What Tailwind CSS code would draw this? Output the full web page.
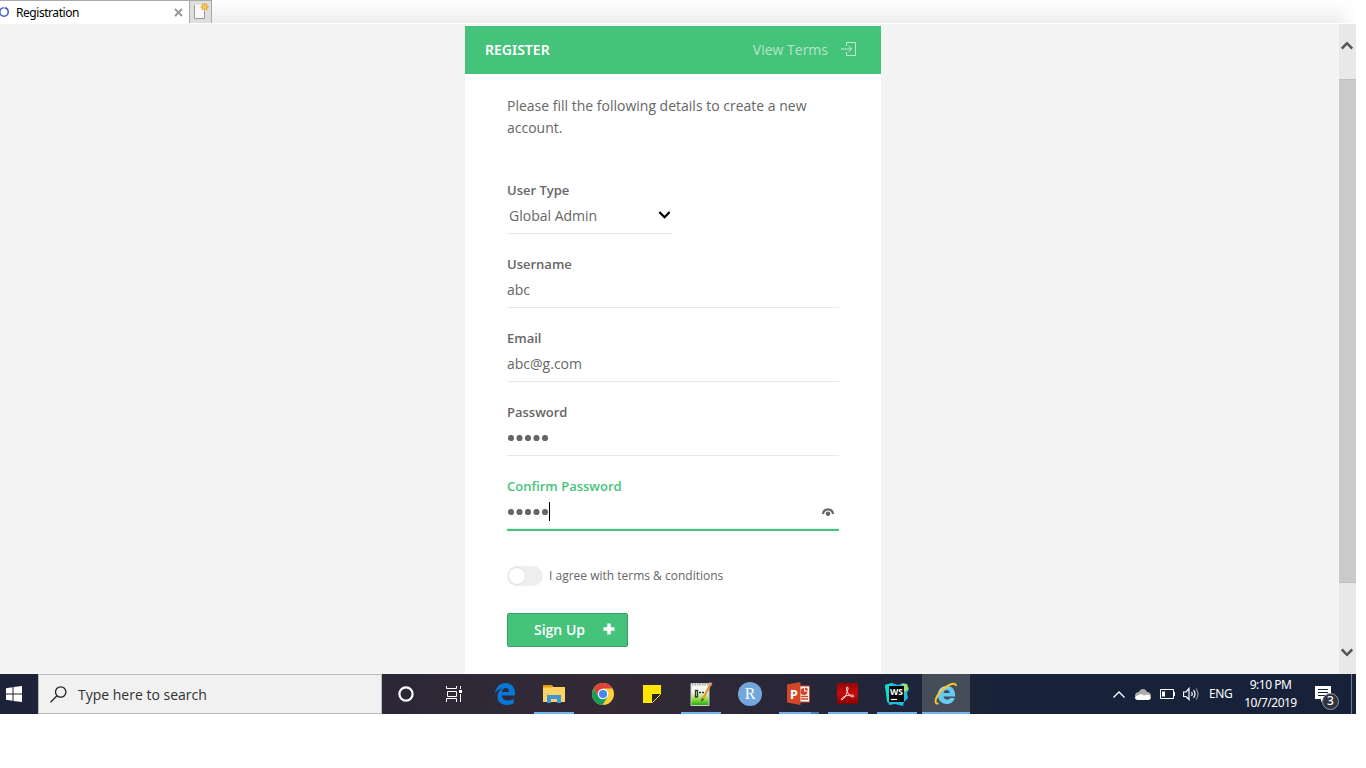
<!DOCTYPE html>
<html lang="en">
<head>
<meta charset="utf-8">
<title>Registration</title>
<script src="https://cdn.jsdelivr.net/npm/@tailwindcss/browser@4"></script>
</head>
<body class="bg-white w-[1366px] h-[768px] overflow-hidden font-['Open_Sans',sans-serif] text-[#666]">
<!-- tab strip -->
<header class="flex w-[1356px] h-6 bg-linear-to-b from-white to-[#eeeeee] border-b border-white font-['Noto_Sans',sans-serif]">
  <div class="w-[189px] h-[23px] bg-white border-t border-[#aaa] flex items-center text-black text-[12px]">
    <svg class="w-[9px] h-3 shrink-0" viewBox="0 0 9 12" fill="none" stroke="#4661b0" stroke-width="1.6"><circle cx="4" cy="6" r="4.200" stroke-dasharray="24.700 1.700" stroke-dashoffset="-.8" transform="rotate(-90 4 6)"/></svg>
    <span class="ml-[7px] w-[158px] whitespace-nowrap pt-px tracking-[-0.45px]">Registration</span>
    <svg class="w-[9px] h-[9px]" viewBox="0 0 9 9" stroke="#999" stroke-width="2"><path d="M1 1l7 7M8 1l-7 7"/></svg>
  </div>
  <div class="w-[23px] h-[23px] bg-[#dedede] border border-b-0 border-[#aaa] flex justify-center">
    <svg class="w-[17px] h-[19px]" viewBox="0 0 17 19"><path d="M2.5 4.500h10v13h-10z" fill="#f8f8f8" stroke="#999"/><path d="M3 4.500h9" stroke="#fff"/><path d="M12.500 2.500v8M8.500 6.500h8M9.700 3.700l5.600 5.600M15.300 3.700L9.700 9.300" stroke="#eda52c" stroke-width="1.3"  transform="translate(0 -.5)"/><circle cx="12.500" cy="6" r="1.800" fill="#ffcc55"/></svg>
  </div>
  <div class="ml-auto w-5 h-[23px] bg-linear-to-r from-transparent to-white"></div>
</header>
<!-- page viewport -->
<div class="flex w-[1356px] h-[650px]">
  <main class="w-[1339px] bg-[#f4f4f4] pl-[465px] pt-[2px]">
    <section class="w-[416px] h-[648px] bg-white">
      <div class="h-12 bg-[#46c37b] flex items-center pl-[20px] pr-[24px] text-[14px]">
        <h1 class="font-['Noto_Sans',sans-serif] font-semibold text-white text-[14px] -mt-px"><span class="inline-block w-[65px]">REGISTER</span></h1>
        <a class="ml-auto text-white/60 -mt-[2px]">View Terms</a>
        <svg class="ml-[13px] w-4 h-4 -mt-[3px]" viewBox="0 0 16 16" fill="none" stroke="#fff" stroke-opacity=".65"><path d="M5.500 5V1.500h9v13h-9V11M0 8h10.500M7.500 5l3 3-3 3"/></svg>
      </div>
      <div class="px-[42px] pt-[21px]">
        <p class="text-[14px] leading-[22px] h-[44px] w-[320px]">Please fill the following details to create a new account.</p>
        <form class="pt-[41px] flex flex-col gap-5">
          <div class="w-[166px] h-[54px] border-b border-[#e8e8e8]">
            <label class="block text-[13px] leading-5 font-semibold">User Type</label>
            <div class="flex items-center justify-between h-[30px] text-[14px] pl-[2px] pr-[3px]"><span>Global Admin</span>
              <svg class="w-3 h-2" viewBox="0 0 12 8" fill="none" stroke="#000" stroke-width="2.200"><path d="M1.300 1l5.200 5.200L11.700 1"/></svg></div>
          </div>
          <div class="h-[54px] border-b border-[#e8e8e8]">
            <label class="block text-[13px] leading-5 font-semibold">Username</label>
            <div class="flex items-center h-[30px] text-[14px]">abc</div>
          </div>
          <div class="h-[54px] border-b border-[#e8e8e8]">
            <label class="block text-[13px] leading-5 font-semibold">Email</label>
            <div class="flex items-center h-[30px] text-[14px]">abc@g.com</div>
          </div>
          <div class="h-[54px] border-b border-[#e8e8e8]">
            <label class="block text-[13px] leading-5 font-semibold">Password</label>
            <svg class="block w-[42px] h-[7px] mt-[13px]" viewBox="0 0 42 7" fill="#666"><circle cx="4" cy="3" r="3.100"/><circle cx="12.500" cy="3" r="3.100"/><circle cx="21" cy="3" r="3.100"/><circle cx="29.500" cy="3" r="3.100"/><circle cx="38" cy="3" r="3.100"/></svg>
          </div>
          <div class="h-[55px] border-b-2 border-[#46c37b]">
            <label class="block text-[13px] leading-5 font-semibold text-[#46c37b]">Confirm Password</label>
            <div class="flex items-start h-[33px] border-b border-[#e0f3e8] pr-[5px]">
              <svg class="block w-[42px] h-[7px] mt-[13px]" viewBox="0 0 42 7" fill="#666"><circle cx="4" cy="3" r="3.100"/><circle cx="12.500" cy="3" r="3.100"/><circle cx="21" cy="3" r="3.100"/><circle cx="29.500" cy="3" r="3.100"/><circle cx="38" cy="3" r="3.100"/></svg>
              <b class="w-px h-[19px] bg-black mt-[6px]"></b>
              <svg class="ml-auto w-3 h-2 mt-[12px]" viewBox="0 0 12 8"><path d="M.9 6C2-.1 10-.1 11.100 6" fill="none" stroke="#666" stroke-width="2.200"/><circle cx="6" cy="5.700" r="2.300" fill="#666"/></svg>
            </div>
          </div>
        </form>
        <div class="mt-[35px] flex items-center h-5 text-[12px]">
          <div class="w-9 h-5 rounded-full bg-[#eee] p-[2px]"><div class="size-4 rounded-full bg-white shadow-[0_0_2px_#ccc]"></div></div>
          <span class="ml-[6px]">I agree with terms &amp; conditions</span>
        </div>
        <button class="mt-[27px] w-[121px] h-[34px] rounded-[2px] bg-[#46c37b] border border-[#34a263] text-white font-semibold text-[14px] flex items-center pl-[26px] pb-[2px]">Sign Up
          <svg class="ml-[18px] w-3 h-3" viewBox="0 0 12 12" fill="#fff"><path d="M4.300.5h3.400v3.800h3.800v3.400H7.700v3.800H4.300V7.700H.5V4.300h3.800z"/></svg>
        </button>
      </div>
    </section>
  </main>
  <aside class="w-[17px] bg-[#e8e8e8] flex flex-col items-center">
    <div class="h-[55px] pt-[17px]"><svg class="w-3 h-[9px] mr-px" viewBox="0 0 12 9" fill="none" stroke="#555" stroke-width="2.500"><path d="M.8 7.500L6 2.200l5.200 5.300"/></svg></div>
    <div class="w-full h-[504px] bg-[#cacaca] border-y border-[#c0c0c0]"></div>
    <div class="pt-[65px]"><svg class="w-3 h-[9px] mr-px" viewBox="0 0 12 9" fill="none" stroke="#555" stroke-width="2.500"><path d="M.8 1.500L6 6.800l5.200-5.300"/></svg></div>
  </aside>
</div>
<!-- taskbar -->
<footer class="flex w-[1356px] h-10 bg-linear-to-r from-[#1c2238] from-0% via-[#342a36] via-45% to-[#17223a] to-75% text-white font-['Noto_Sans',sans-serif]">
  <div class="w-[38px] flex items-center pl-[6px]"><svg class="w-4 h-4" viewBox="0 0 16 16" fill="#fff"><path d="M0 2.200L6.500 1.300V7.500H0zM7.500 1.100L16 0V7.500H7.500zM0 8.500h6.500v6.200L0 13.800zM7.500 8.500H16V16l-8.500-1.100z"/></svg></div>
  <div class="w-[344px] bg-[#f1f1f1] border border-[#bbb] flex items-center pl-[11px] text-[#303030] font-['Open_Sans',sans-serif] text-[14px]">
    <svg class="w-[17px] h-[17px]" viewBox="0 0 17 17" fill="none" stroke="#222" stroke-width="1.300"><circle cx="10.700" cy="6" r="5.200"/><path d="M7 9.800L.5 16.300"/></svg>
    <span class="ml-[11px]">Type here to search</span>
  </div>
  <div class="w-12 flex items-center justify-center"><svg class="w-4 h-4" viewBox="0 0 16 16"><circle cx="8" cy="8" r="6.600" fill="none" stroke="#fff" stroke-width="2.200"/></svg></div>
  <div class="w-12 flex items-center justify-center"><svg class="w-4 h-4 mb-px" viewBox="0 0 16 16" fill="none" stroke="#fff"><path d="M.5 0v2.500h10V0M.5 16v-3.500h10V16M1.500 5.500h9v5h-9zM14.500 0v3M14.500 8v8"/><path d="M13 4h3v3h-3z" fill="#fff" stroke="none"/></svg></div>
  <nav class="flex gap-px ml-[3px]">
    <div class="w-12 flex items-center justify-center"><svg class="w-[20px] h-[22px]" viewBox="0 0 20 22"><path d="M0 10C1 4 5 0 10.500 0 16.500 0 20 4.500 20 10v2.500H6.800c.3 3.500 3 4.900 6 4.900 2.300 0 4.100-.6 5.900-1.700v4.500c-2.100 1.200-4.300 1.700-6.800 1.700C6 22 2.500 18.500 2.500 13.500c0-3.500 1.800-6.400 5-8C7.200 5.600 2.800 6 0 10zm7-1h7c0-2.500-1.200-4-3.300-4S7.500 6.500 7 9z" fill="#0878d8" fill-rule="evenodd"/></svg></div>
    <div class="w-12 flex flex-col items-center justify-between"><svg class="w-[22px] h-5 mt-[10px]" viewBox="0 0 22 20"><path d="M0 1h9l1 2h12v15H0z" fill="#ffd264"/><path d="M0 1h9v2.500H0z" fill="#dca000"/><path d="M4 19v-8h14v8h-4v-4H8v4z" fill="#3d96d7"/></svg><b class="w-10 h-[2px] bg-[#72b5f1]"></b></div>
    <div class="w-12 flex items-center justify-center"><svg class="w-[22px] h-[22px]" viewBox="0 0 22 22"><circle cx="11" cy="11" r="11" fill="#fbcf3a"/><path d="M1.500 5.500A11 11 0 0 1 20.500 5.500H11L6.500 13.500z" fill="#dc4437"/><path d="M1.500 5.500A11 11 0 0 0 10.500 22L15.500 14 6.500 13.500z" fill="#169b5a"/><circle cx="11" cy="11" r="5.300" fill="#fff"/><circle cx="11" cy="11" r="4.100" fill="#4788f4"/></svg></div>
    <div class="w-12 flex items-center justify-center"><svg class="w-[18px] h-[18px]" viewBox="0 0 18 18"><path d="M0 0h18v18H0z" fill="#ffe500"/><path d="M9 9h9l-9 9z" fill="#26262b"/><path d="M18 9v9H9z" fill="#342a36"/><path d="M17.500 9.500l-8 8" stroke="#ffe500"/></svg></div>
    <div class="w-12 flex flex-col items-center justify-between"><svg class="w-[23px] h-6 mt-2" viewBox="0 0 23 24"><defs><linearGradient id="g" x2="0" y2="1"><stop offset=".4" stop-color="#f4f8ee"/><stop offset=".75" stop-color="#83d935"/><stop offset="1" stop-color="#20a51b"/></linearGradient></defs><path d="M1 1.500h18v22H1z" fill="url(#g)" stroke="#ccc"/><path d="M2 2.500h16" stroke="#aaa" stroke-width="2" stroke-dasharray="1.500 1"/><path d="M7.500 15H5.500V8.500H7.500V15M9 10.500h2M12 10.500h2" stroke="#333" fill="none" stroke-width="1.300"/><path d="M20.500 2L13 17" stroke="#e3992f" stroke-width="2.400"/><path d="M19.800 3.300l1.300-2.600" stroke="#d99991" stroke-width="3"/><path d="M11.800 15.800L11 20l3.200-2.500z" fill="#6b4b29"/></svg><b class="w-10 h-[2px] bg-[#72b5f1]"></b></div>
    <div class="w-12 flex items-center justify-center"><div class="size-6 rounded-full bg-[#73a7dc] flex items-center justify-center text-[16px] leading-none pb-px font-['Liberation_Serif',serif]">R</div></div>
    <div class="w-12 flex flex-col items-center justify-between"><svg class="w-[23px] h-6 mt-2 mr-px" viewBox="0 0 23 24"><path d="M11 4h11.500v16H11z" fill="#fff" stroke="#d24726"/><path d="M14 14.500h7M14 17h7" stroke="#d24726" stroke-width="1.300"/><path d="M17 6a3.500 3.500 0 1 0 3.500 3.500H17z" fill="#d24726"/><path d="M18 5.500V8.500h3A3 3 0 0 0 18 5.500" fill="#d24726"/><path d="M0 2.500L13.500 0v23L0 20.500z" fill="#d24726"/><text x="3" y="16.500" font-family="Noto Sans" font-weight="700" font-size="12.500" fill="#fff">P</text></svg><b class="w-10 h-[2px] bg-[#72b5f1] border-r-8 border-[#4682b4]"></b></div>
    <div class="w-12 flex flex-col items-center justify-between"><svg class="w-[21px] h-[21px] mt-[9px] mr-px" viewBox="0 0 21 21"><defs><linearGradient id="r" x2="0" y2="1"><stop stop-color="#950707"/><stop offset=".5" stop-color="#c80b0b"/><stop offset="1" stop-color="#840303"/></linearGradient></defs><path d="M0 0h21v21H0z" fill="url(#r)"/><path d="M10.500 9C8 4 10.700 2.700 11 5c.3 2-3.300 11.500-6 11.700C2 16.500 8 12 14 12c4 0 3.500 2.300 1 1.800C12.500 13 11.200 11 10.500 9z" fill="none" stroke="#ffe5e5" stroke-width="1"/></svg><b class="w-10 h-[2px] bg-[#72b5f1]"></b></div>
    <div class="w-12 flex flex-col items-center justify-between"><svg class="w-6 h-6 mt-2" viewBox="0 0 24 24"><path d="M0 3l7-2 6 2 5-2 4 1 2 5-2 4 1 5-4 4-1 4-8-2-6 1-2-7z" fill="#20b8e8"/><path d="M0 3l7-2-2 20-3-1z" fill="#10ddcc"/><path d="M17 2l5 0 1 6-4 2z" fill="#a6df61"/><path d="M4 4h15v16H4z" fill="#080808"/><text x="5" y="13" font-family="Noto Sans" font-weight="700" font-size="9" textLength="13" lengthAdjust="spacingAndGlyphs" fill="#fff">WS</text><path d="M6 17.500h6" stroke="#fff" stroke-width="1.200"/></svg><b class="w-10 h-[2px] bg-[#72b5f1]"></b></div>
    <div class="w-12 bg-[#474c59] flex flex-col items-center justify-between"><svg class="w-[24px] h-6 mt-2" viewBox="0 0 24 24"><path d="M21 14.500H9.500c.3 2 1.500 3 3.500 3 1.500 0 2.500-.5 3.200-1.500h4.600C19.500 19.700 16.800 22 12.800 22 7.500 22 4 18.500 4 13s3.700-9 8.900-9c5.500 0 8.600 4 8.100 10.500zM9.600 11h6.200c-.2-2-1.300-3-3.100-3s-2.800 1-3.100 3z" fill="#65cdf5" fill-rule="evenodd"/><path d="M5 10c1.500-3.500 5-5.500 9-4.700" fill="none" stroke="#b0e9fc" stroke-width="1.200"/><path d="M4.500 21.500C-1 22.500 1.500 14 8.500 7.500 15 2 22-.5 22 4" fill="none" stroke="#f6c52c" stroke-width="2"/></svg><b class="w-12 h-[2px] bg-[#72b5f1]"></b></div>
  </nav>
  <div class="ml-auto flex items-center text-[12px] h-full">
    <svg class="w-3 h-[7px]" viewBox="0 0 12 7" fill="none" stroke="#fff" stroke-width="1.300"><path d="M.5 6.500L6 1l5.500 5.500"/></svg>
    <svg class="ml-[10px] w-4 h-[11px]" viewBox="0 0 16 11"><path d="M0 7.500C0 4 2 3 4 3c1-4 7-4 8 0 3 0 4 2 4 4z" fill="#aaa"/><path d="M3 11C-1 11-1 6.500 3 6.500c3-2 4-1 6 0l3-1c5 0 5 5.500 1 5.500z" fill="#fff"/></svg>
    <svg class="ml-[9px] w-[15px] h-[10px]" viewBox="0 0 15 10" fill="none" stroke="#fff"><path d="M.5.5h13v9H.5zM14.500 3v4"/><path d="M2 2.500h3v5H2z" fill="#fff" stroke="none"/></svg>
    <svg class="ml-2 w-4 h-[14px]" viewBox="0 0 16 14" fill="none" stroke="#fff" stroke-width="1.200"><path d="M.5 5v4.500H3L6 12.500V1.500L3 5zM8.500 5q1.500 2 0 4M10.500 3.200q3 3.800 0 7.600"/><path d="M13 1.500q4 5.500 0 11" opacity=".5"/></svg>
    <span class="ml-[10px] w-[25px] tracking-[-0.4px]">ENG</span>
    <div class="ml-[10px] w-[53px] text-center leading-[18px] tracking-[-0.5px] whitespace-nowrap"><div>9:10 PM</div><div>10/7/2019</div></div>
    <div class="relative ml-[18px] w-6 h-full"><svg class="mt-3 w-4 h-4" viewBox="0 0 16 16"><path d="M0 0h16v13H9l-3 3v-3H0z" fill="#fff"/><path d="M3 3.500h10M3 6.500h10M3 9.500h7" stroke="#17223a"/></svg>
      <div class="absolute left-[7px] top-[19px] size-[17px] rounded-full bg-[#30333c] border border-[#999] text-[12px] font-medium leading-[14px] text-center">3</div></div>
    <div class="ml-[12px] mr-1 w-px h-full bg-[#747b8b]"></div>
  </div>
</footer>
</body>
</html>
